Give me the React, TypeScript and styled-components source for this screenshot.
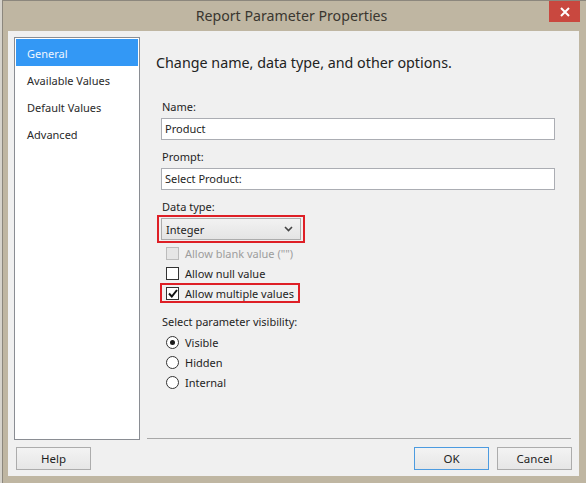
import styled, { createGlobalStyle } from "styled-components";

const GlobalStyle = createGlobalStyle`
  html, body {
    margin: 0;
    padding: 0;
    background: #d6d3cc;
  }
  body {
    font-family: "Noto Sans", "Open Sans", sans-serif;
    font-size: 11px;
    color: #1e1e1e;
  }
`;

const Window = styled.div`
  width: 584px;
  height: 483px;
  margin-left: 2px;
  box-sizing: border-box;
  background: #bfb6a2;
  border-left: 1px solid #8c877d;
  border-top: 1px solid #8c877d;
  display: flex;
  flex-direction: column;
`;

const TitleBar = styled.div`
  height: 30px;
  display: grid;
  grid-template-columns: 1fr auto 1fr;
  align-items: start;
  padding-right: 6px;
`;

const Title = styled.div`
  grid-column: 2;
  font-size: 14.2px;
  line-height: 30px;
  color: #3a3630;
`;

const CloseButton = styled.div`
  grid-column: 3;
  justify-self: end;
  width: 31px;
  height: 21px;
  background: #c9483f;
  display: flex;
  align-items: center;
  justify-content: center;
`;

const Client = styled.div`
  margin: 0 7px 0 5px;
  height: 445px;
  background: #f0f0f0;
  display: flex;
  flex-direction: column;
`;

const Body = styled.div`
  display: flex;
  padding: 6px 8px 0 6px;
  height: 403px;
`;

const NavList = styled.ul`
  list-style: none;
  margin: 0;
  padding: 1px;
  width: 126px;
  box-sizing: border-box;
  background: #fff;
  border: 1px solid #8a8d93;
`;

const NavItem = styled.li<{ $active?: boolean }>`
  height: 27px;
  line-height: 29px;
  padding-left: 11px;
  background: ${(p) => (p.$active ? "#3398f5" : "transparent")};
  color: ${(p) => (p.$active ? "#eef6ff" : "#2a2a2a")};
`;

const Main = styled.div`
  flex: 1;
  margin-left: 7px;
  height: 402px;
  border-bottom: 1px solid #a8a8a8;
  padding: 15px 16px 0 9px;
  box-sizing: border-box;
`;

const Heading = styled.h1`
  margin: 0;
  font-size: 14.3px;
  font-weight: normal;
  line-height: 22px;
  color: #222;
`;

const Form = styled.div`
  margin-top: 25px;
  padding-left: 5px;
  display: flex;
  flex-direction: column;
`;

const Label = styled.div<{ $gap?: number }>`
  line-height: 16px;
  margin-top: ${(p) => p.$gap ?? 9}px;
  margin-bottom: 3px;
  padding-left: 1px;
`;

const TextBox = styled.div`
  height: 22px;
  box-sizing: border-box;
  background: #fff;
  border: 1px solid #abadb3;
  line-height: 20px;
  padding-left: 3px;
`;

const Highlight = styled.div<{ $w: number }>`
  width: ${(p) => p.$w}px;
  box-sizing: border-box;
  border: 2px solid #de1f26;
`;

const SelectFrame = styled(Highlight)`
  margin: -3px 0 -3px -4px;
  padding: 1px 2px;
`;

const Select = styled.div`
  height: 22px;
  box-sizing: border-box;
  border: 1px solid #acacac;
  background: linear-gradient(#f2f2f2, #e4e4e4);
  display: flex;
  align-items: center;
  justify-content: space-between;
  padding: 0 7px 0 4px;
`;

const Options = styled.div`
  margin-top: 3px;
  display: flex;
  flex-direction: column;
`;

const CheckRow = styled.div<{ $disabled?: boolean }>`
  height: 20px;
  display: flex;
  align-items: center;
  gap: 6px;
  padding-left: 5px;
  box-sizing: border-box;
  white-space: nowrap;
  color: ${(p) => (p.$disabled ? "#9d9d9d" : "#1e1e1e")};
`;

const CheckFrame = styled(Highlight)`
  height: 20px;
  margin-left: -1px;
  display: flex;
  align-items: center;
  gap: 6px;
  padding-left: 4px;
  white-space: nowrap;
`;

const Box = styled.span<{ $disabled?: boolean }>`
  width: 13px;
  height: 13px;
  flex-shrink: 0;
  box-sizing: border-box;
  border: 1px solid ${(p) => (p.$disabled ? "#bcbcbc" : "#333")};
  background: ${(p) => (p.$disabled ? "#e6e6e6" : "#fff")};
  display: flex;
  align-items: center;
  justify-content: center;
`;

const RadioList = styled.div`
  margin-top: -1px;
`;

const Radio = styled.span<{ $on?: boolean }>`
  width: 13px;
  height: 13px;
  flex-shrink: 0;
  box-sizing: border-box;
  border: 1px solid #333;
  border-radius: 50%;
  background: #fff;
  display: flex;
  align-items: center;
  justify-content: center;
  &::after {
    content: "";
    display: ${(p) => (p.$on ? "block" : "none")};
    width: 5px;
    height: 5px;
    border-radius: 50%;
    background: #1a1a1a;
  }
`;

const Footer = styled.div`
  display: flex;
  gap: 8px;
  padding: 7px 7px 0 8px;
`;

const Button = styled.button<{ $default?: boolean }>`
  width: 75px;
  height: 23px;
  box-sizing: border-box;
  font: inherit;
  font-size: 11.5px;
  color: #1e1e1e;
  border: 1px solid ${(p) => (p.$default ? "#4c9be0" : "#acacac")};
  background: linear-gradient(#f3f3f3, #e6e6e6);
  padding: 0;
`;

const Spacer = styled.div`
  flex: 1;
`;

const checks = [
  { label: "Allow blank value (\"\")", disabled: true },
  { label: "Allow null value" },
];

const visibility = ["Visible", "Hidden", "Internal"];

function CheckMark() {
  return (
    <svg width="10" height="9" viewBox="0 0 10 9">
      <polyline points="1,4.5 3.8,7.5 9,1" fill="none" stroke="#111" strokeWidth="2" />
    </svg>
  );
}

export default function App() {
  return (
    <>
      <GlobalStyle />
      <Window>
        <TitleBar>
          <Title>Report Parameter Properties</Title>
          <CloseButton>
            <svg width="10" height="10" viewBox="0 0 10 10">
              <path d="M1 1L9 9M9 1L1 9" stroke="#fff" strokeWidth="2" />
            </svg>
          </CloseButton>
        </TitleBar>
        <Client>
          <Body>
            <NavList>
              <NavItem $active>General</NavItem>
              <NavItem>Available Values</NavItem>
              <NavItem>Default Values</NavItem>
              <NavItem>Advanced</NavItem>
            </NavList>
            <Main>
              <Heading>Change name, data type, and other options.</Heading>
              <Form>
                <Label $gap={0}>Name:</Label>
                <TextBox>Product</TextBox>
                <Label>Prompt:</Label>
                <TextBox>Select Product:</TextBox>
                <Label>Data type:</Label>
                <SelectFrame $w={148}>
                  <Select>
                    <span>Integer</span>
                    <svg width="9" height="6" viewBox="0 0 9 6">
                      <polyline points="1,1 4.5,4.5 8,1" fill="none" stroke="#444" strokeWidth="1.6" />
                    </svg>
                  </Select>
                </SelectFrame>
                <Options>
                  {checks.map((c) => (
                    <CheckRow key={c.label} $disabled={c.disabled}>
                      <Box $disabled={c.disabled} />
                      {c.label}
                    </CheckRow>
                  ))}
                  <CheckFrame $w={140}>
                    <Box>
                      <CheckMark />
                    </Box>
                    Allow multiple values
                  </CheckFrame>
                </Options>
                <Label $gap={11}>Select parameter visibility:</Label>
                <RadioList>
                  {visibility.map((v, i) => (
                    <CheckRow key={v}>
                      <Radio $on={i === 0} />
                      {v}
                    </CheckRow>
                  ))}
                </RadioList>
              </Form>
            </Main>
          </Body>
          <Footer>
            <Button>Help</Button>
            <Spacer />
            <Button $default>OK</Button>
            <Button>Cancel</Button>
          </Footer>
        </Client>
      </Window>
    </>
  );
}
